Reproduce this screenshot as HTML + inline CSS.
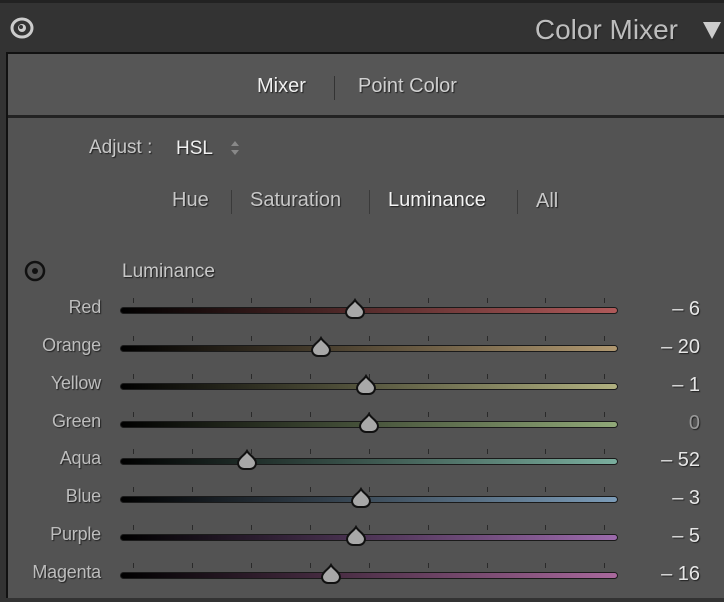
<!DOCTYPE html>
<html><head><style>
body{margin:0;width:724px;height:602px;background:#333;overflow:hidden;font-family:"Liberation Sans",sans-serif;position:relative}
.t{position:absolute;white-space:nowrap;text-shadow:1px 1px 1px #222}
#panel{position:absolute;left:6px;top:52px;width:730px;height:546px;background:#535353;border-left:2px solid #111;border-top:2px solid #111}
#mix{position:absolute;left:8px;top:54px;width:716px;height:61px;background:#565656;border-bottom:3px solid #222}
.track{position:absolute;left:120px;width:496px;height:5px;border:1.5px solid #1a1a1a;border-radius:4px}
.tick{position:absolute;width:1px;height:5px;background:#2a2a2a}
.lab{position:absolute;right:623px;color:#bdbdbd;font-size:18px;letter-spacing:-0.2px;text-shadow:1px 1px 1px #222}
.val{position:absolute;right:24px;color:#e6e6e6;font-size:20px;text-shadow:1px 1px 1px #222}
</style></head><body>
<div style="position:absolute;left:0;top:0;width:724px;height:3px;background:#222"></div>
<svg style="position:absolute;left:10px;top:17px" width="24" height="22" viewBox="0 0 24 22"><ellipse cx="12" cy="11" rx="10" ry="9" fill="none" stroke="#ccc" stroke-width="3"/><circle cx="12" cy="11" r="4" fill="#ccc"/><circle cx="11" cy="10" r="2" fill="#333"/></svg>
<div class="t" style="right:46px;top:14px;font-size:28px;color:#bdbdbd">Color Mixer</div>
<div style="position:absolute;left:703px;top:22px;width:0;height:0;border-left:9px solid transparent;border-right:9px solid transparent;border-top:17px solid #ccc"></div>
<div id="panel"></div>
<div id="mix"></div>
<div class="t" style="left:257px;top:75px;font-size:20px;color:#f0f0f0">Mixer</div>
<div style="position:absolute;left:334px;top:76px;width:1px;height:24px;background:#333"></div>
<div class="t" style="left:358px;top:75px;font-size:20px;color:#d0d0d0">Point Color</div>
<div class="t" style="left:89px;top:137px;font-size:19px;color:#c8c8c8">Adjust :</div>
<div class="t" style="left:176px;top:138px;font-size:19px;color:#f0f0f0">HSL</div>
<div style="position:absolute;left:231px;top:141px;border-left:4px solid transparent;border-right:4px solid transparent;border-bottom:5px solid #888"></div>
<div style="position:absolute;left:231px;top:150px;border-left:4px solid transparent;border-right:4px solid transparent;border-top:5px solid #888"></div>
<div class="t" style="left:172px;top:189px;font-size:20px;color:#c8c8c8">Hue</div>
<div style="position:absolute;left:231px;top:190px;width:1px;height:24px;background:#3a3a3a"></div>
<div class="t" style="left:250px;top:189px;font-size:20px;color:#c8c8c8">Saturation</div>
<div style="position:absolute;left:369px;top:190px;width:1px;height:24px;background:#3a3a3a"></div>
<div class="t" style="left:388px;top:189px;font-size:20px;color:#f4f4f4">Luminance</div>
<div style="position:absolute;left:517px;top:190px;width:1px;height:24px;background:#3a3a3a"></div>
<div class="t" style="left:536px;top:190px;font-size:20px;color:#c8c8c8">All</div>
<svg style="position:absolute;left:24px;top:260px" width="22" height="22"><circle cx="11" cy="11" r="9" fill="none" stroke="#111" stroke-width="2.5"/><circle cx="11" cy="11" r="3" fill="#111"/></svg>
<div class="t" style="left:122px;top:261px;font-size:19px;color:#c8c8c8">Luminance</div>
<div id="rows"></div>
<script>
var rows=[["Red","#b05a5a",355,"– 6"],["Orange","#b09870",321,"– 20"],["Yellow","#b0b080",366,"– 1"],["Green","#90a878",369,"0"],["Aqua","#7aae9e",247,"– 52"],["Blue","#7c9cb8",361,"– 3"],["Purple","#9c6aac",356,"– 5"],["Magenta","#a8689c",331,"– 16"]];
var ticks=[133,192,251,310,369,428,487,545,604],h="";
rows.forEach(function(r,i){var y=310+i*38-(i>3?1:0);
h+='<div class="lab" style="top:'+(y-13)+'px">'+r[0]+'</div>';
ticks.forEach(function(x){h+='<div class="tick" style="left:'+x+'px;top:'+(y-12)+'px"></div>'});
h+='<div class="track" style="top:'+(y-3)+'px;background:linear-gradient(90deg,#000,'+r[1]+')"></div>';
h+='<svg style="position:absolute;left:'+(r[2]-11)+'px;top:'+(y-12)+'px" width="22" height="22"><path d="M11 2 C13 6 20 9 20 14 A6 6 0 0 1 14 20 L8 20 A6 6 0 0 1 2 14 C2 9 9 6 11 2Z" fill="#a8a8a8" stroke="#111" stroke-width="2"/></svg>';
h+='<div class="val" style="top:'+(y-12)+'px;'+(r[3]=="0"?"color:#999":"")+'">'+r[3]+'</div>';});
document.getElementById("rows").innerHTML=h;
</script>
<div style="position:absolute;left:0;top:598px;width:724px;height:4px;background:#333"></div>
</body></html>
